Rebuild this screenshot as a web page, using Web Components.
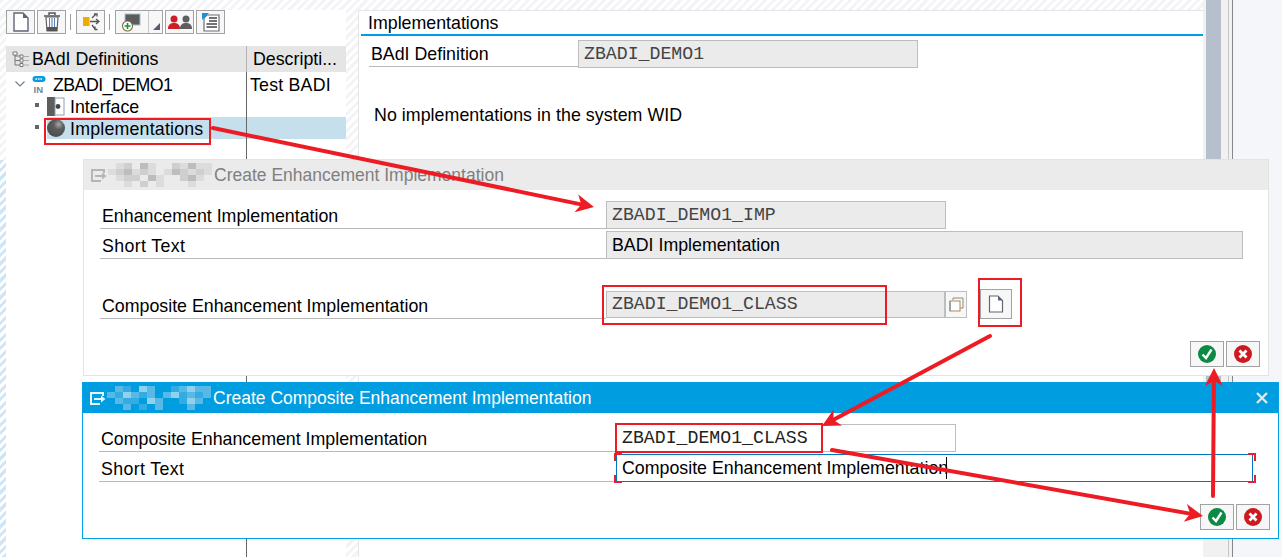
<!DOCTYPE html>
<html lang="en">
<head>
<meta charset="utf-8">
<title>BAdI Definitions</title>
<style>
  html, body { margin: 0; padding: 0; height: 100%; overflow: hidden; background: #fff; }
  body { font-family: "Liberation Sans", Arial, sans-serif; font-size: 17.8px; color: #000; }
  [slot="icon"] { display: block; }
</style>
</head>
<body>

<sap-screen>
  <sap-shell>
    <div slot="toolbar">
      <sap-toolbar>
        <sap-tool><svg width="18" height="20" viewBox="0 0 18 20"><path d="M2 1h9l5 5v13H2z" fill="#fff" stroke="#5f6478" stroke-width="1.4"/><path d="M11 1v5h5z" fill="#5f6478"/></svg></sap-tool>
        <sap-tool><svg width="18" height="20" viewBox="0 0 18 20"><path d="M1 4h16M6 3V1h6v2" fill="none" stroke="#555" stroke-width="1.5"/><path d="M3 5h12l-1 14H4z" fill="#fff" stroke="#666" stroke-width="1.2"/><path d="M3.6 15h10.8l-.4 4H4z" fill="#555"/><path d="M6.5 6v9M9 6v9M11.5 6v9" stroke="#5a82b0" stroke-width="1.1"/></svg></sap-tool>
        <sap-sep></sap-sep>
        <sap-tool><svg width="18" height="20" viewBox="0 0 18 20"><rect x="1" y="5" width="6.5" height="9" fill="#f0ab00"/><path d="M8 9.500h9M14 7l3 2.500-3 2.500M10 6l4-4M12 2h3v2.500M10 13l3 4M13 14.500V17.500h2.500" fill="none" stroke="#555" stroke-width="1.3"/></svg></sap-tool>
        <sap-sep></sap-sep>
        <sap-tool split><svg width="20" height="19" viewBox="0 0 20 19"><rect x="4" y="1" width="15" height="11" fill="#5c5c5c" stroke="#a8bccd"/><circle cx="6.500" cy="13" r="5" fill="#fff" stroke="#7a6a3a" stroke-width="1.1"/><path d="M6.500 10v6M3.500 13h6" stroke="#159447" stroke-width="1.6"/></svg></sap-tool>
        <sap-tool><svg width="24" height="15" viewBox="0 0 24 15"><circle cx="6" cy="4" r="3.500" fill="#d01c24"/><path d="M0 14c0-5 3-6 6-6s6 1 6 6z" fill="#d01c24"/><circle cx="18" cy="4" r="3.500" fill="#5f5f5f"/><path d="M12 14c0-5 3-6 6-6s6 1 6 6z" fill="#5f5f5f"/></svg></sap-tool>
        <sap-tool><svg width="20" height="20" viewBox="0 0 20 20"><path d="M6 3h12v16H3V6z" fill="#fff" stroke="#6a6e78" stroke-width="1.2"/><path d="M1 1h7L1 8z" fill="#1d8fd6"/><path d="M8 6h8M8 9h8M5.500 12h10.500M5.500 15h10.500" stroke="#444" stroke-width="1.400"/></svg></sap-tool>
      </sap-toolbar>
    </div>

    <sap-tree slot="tree">
      <svg slot="header-icon" width="18" height="17" viewBox="0 0 18 17"><path d="M3 2v12M3 5h5M3 9.500h5M3 14h5" fill="none" stroke="#777"/><path d="M1 1h4v3H1zM8 4h3v3H8zM8 8h3v3H8zM8 12.500h3v3H8z" fill="#fff" stroke="#777"/><path d="M12 5.500h5M12 9.500h5M12 14h5" stroke="#aaa"/></svg>
      <span slot="header">BAdI Definitions</span>
      <span slot="desc-header">Descripti...</span>
      <sap-tree-row kind="open" desc="Test BADI">
        <svg slot="icon" width="14" height="20" viewBox="0 0 14 20"><rect x="0.500" y="2" width="13" height="6" rx="3" fill="#0a9ce0"/><path d="M3.500 5h7" stroke="#fff" stroke-dasharray="1.500 1" stroke-width="1.600"/><text x="1.500" y="18.500" font-family="Liberation Sans, sans-serif" font-size="9.500" font-weight="700" fill="#6f8796">IN</text></svg>
        <span style="letter-spacing:-.55px">ZBADI_DEMO1</span>
      </sap-tree-row>
      <sap-tree-row kind="leaf">
        <svg slot="icon" width="18" height="19" viewBox="0 0 18 19"><rect x="0" y="0" width="8" height="19" fill="#5e5e5e"/><rect x="8" y="1" width="9" height="17" fill="#fff" stroke="#8aa0b0"/><circle cx="11" cy="9.500" r="2.400" fill="#444"/></svg>
        Interface
      </sap-tree-row>
      <sap-tree-row kind="leaf" selected>
        <svg slot="icon" width="18" height="18" viewBox="0 0 18 18"><defs><radialGradient id="ball" cx="0.650" cy="0.300" r="0.800"><stop offset="0" stop-color="#a8a8a8"/><stop offset="0.350" stop-color="#5d5d5d"/><stop offset="1" stop-color="#4a4a4a"/></radialGradient></defs><circle cx="9" cy="9" r="9" fill="url(#ball)"/></svg>
        <span style="letter-spacing:.2px">Implementations</span>
      </sap-tree-row>
    </sap-tree>

    <sap-detail slot="detail" heading="Implementations">
      <sap-row label="BAdI Definition" label-width="209" style="--row-h:27px">
        <sap-field mono width="340">ZBADI_DEMO1</sap-field>
      </sap-row>
      <sap-note>No implementations in the system WID</sap-note>
    </sap-detail>
  </sap-shell>

  <sap-dialog style="left:83px;top:159px;width:1186px;height:217px" heading="Create Enhancement Implementation" bar-colour="#ebebeb" edge="#e3e3e3" text="#808080" mask="grey" body-top="11" body-left="16">
    <sap-row label="Enhancement Implementation" label-width="506">
      <sap-field mono width="340">ZBADI_DEMO1_IMP</sap-field>
    </sap-row>
    <sap-row label="Short Text" label-width="506" style="margin-top:2px;--label-ls:.35px">
      <sap-field width="637">BADI Implementation</sap-field>
    </sap-row>
    <sap-row label="Composite Enhancement Implementation" label-width="506" style="margin-top:32px">
      <sap-field mono width="339" style="--field-h:27px">ZBADI_DEMO1_CLASS</sap-field>
      <sap-help></sap-help>
      <sap-tool style="--tool-w:32px;--tool-h:30px;margin:-2px 0 0 13px;align-self:flex-start"><svg width="16" height="18" viewBox="0 0 16 18"><path d="M1.500 1h8.500l4.500 4.500V17h-13z" fill="#fff" stroke="#5f6478" stroke-width="1.200"/><path d="M10 1v4.500h4.500z" fill="#5f6478"/></svg></sap-tool>
    </sap-row>
    <sap-actions slot="actions" style="--act-right:8px;--act-bottom:8px"></sap-actions>
  </sap-dialog>

  <sap-dialog style="left:82px;top:382px;width:1197px;height:157px" heading="Create Composite Enhancement Implementation" bar-colour="#009de0" edge="#00a0e3" text="#fff" mask="blue" closable body-top="11" body-left="16">
    <sap-row label="Composite Enhancement Implementation" label-width="517">
      <sap-field plain mono width="340">ZBADI_DEMO1_CLASS</sap-field>
    </sap-row>
    <sap-row label="Short Text" label-width="517" style="margin-top:2px;--label-ls:.35px">
      <sap-field focus width="637">Composite Enhancement Implementation</sap-field>
    </sap-row>
    <sap-actions slot="actions" style="--act-right:8px;--act-bottom:8px"></sap-actions>
  </sap-dialog>

  <sap-marks></sap-marks>
</sap-screen>

<script>
/* SAP GUI screen - vanilla Web Components, no framework */

const HATCH = 'repeating-linear-gradient(135deg,#f2f4f8 0 3px,#fff 3px 6px)';

function attach(el, html) {
  el.attachShadow({ mode: 'open' }).innerHTML = html;
}

class SapScreen extends HTMLElement {
  constructor() {
    super();
    attach(this, `<style>:host{display:block;position:relative;width:1282px;height:557px;overflow:hidden}</style><slot></slot>`);
  }
}
customElements.define('sap-screen', SapScreen);

class SapShell extends HTMLElement {
  constructor() {
    super();
    attach(this, `<style>
      :host{display:grid;height:557px;background:${HATCH};
        grid-template-columns:6px 340px 12px 845px 3px 15px 7px 1px 3px 1px 1fr;
        grid-template-rows:10px 36px 1fr}
      .stripe{grid-column:1;grid-row:3;margin-top:114px;background:repeating-linear-gradient(135deg,#cfe6f6 0 3px,#fff 3px 6px)}
      .left{grid-column:2;grid-row:2/4;display:flex;flex-direction:column;background:#fff;min-width:0}
      .tools{height:36px;flex:none}
      .tree{flex:1;display:flex;min-height:0}
      .detail{grid-column:4;grid-row:2/4;display:flex;min-width:0}
      .gap{grid-column:5/8;grid-row:1/4;background:#f1f1f1}
      .sash{grid-column:6;grid-row:1/4;height:500px;background:#b5c0cc}
      .pad{background:#f1f1f1;grid-row:1/4}
      .ln1{grid-column:8;grid-row:1/4;background:#c6c6c6}
      .ln2{grid-column:10;grid-row:1/4;background:#888}
      .rest{grid-column:11;grid-row:1/4;background:#f4f6fa}
    </style>
    <div class="stripe"></div>
    <div class="left"><div class="tools"><slot name="toolbar"></slot></div><div class="tree"><slot name="tree"></slot></div></div>
    <div class="detail"><slot name="detail"></slot></div>
    <div class="gap"></div><div class="sash"></div>
    <div class="ln1"></div>
    <div class="pad" style="grid-column:9"></div><div class="ln2"></div><div class="rest"></div>`);
  }
}
customElements.define('sap-shell', SapShell);

class SapToolbar extends HTMLElement {
  constructor() {
    super();
    attach(this, `<style>:host{display:flex;align-items:flex-start;gap:2px;height:24px}</style><slot></slot>`);
  }
}
customElements.define('sap-toolbar', SapToolbar);

class SapTool extends HTMLElement {
  constructor() {
    super();
    const split = this.hasAttribute('split');
    attach(this, `<style>
      :host{display:inline-flex;box-sizing:border-box;flex:none;width:var(--tool-w,${split ? '48px' : '29px'});height:var(--tool-h,24px);
        border:1px solid #a2a2a2;background:#f7f7f7}
      .main{flex:1;display:flex;align-items:center;justify-content:center;min-width:0}
      .drop{width:13px;border-left:1px solid #c8c8c8;position:relative}
      .drop::after{content:"";position:absolute;right:2px;bottom:3px;border-style:solid;border-width:0 0 7px 7px;border-color:transparent transparent #5a5a72 transparent}
    </style><span class="main"><slot></slot></span>${split ? '<span class="drop"></span>' : ''}`);
    if (split) this.shadowRoot.querySelector('.main').style.cssText = 'justify-content:flex-start;padding-left:5px';
  }
}
customElements.define('sap-tool', SapTool);

class SapSep extends HTMLElement {
  constructor() {
    super();
    attach(this, `<style>:host{display:block;width:1px;height:16px;background:#9b9b9b;margin:4px 3px 0 2px}</style>`);
  }
}
customElements.define('sap-sep', SapSep);

class SapTree extends HTMLElement {
  constructor() {
    super();
    attach(this, `<style>
      :host{display:flex;flex-direction:column;flex:1;min-width:0;line-height:20px}
      .head{display:grid;grid-template-columns:241px 1fr;height:26px;background:#e5e5e5;flex:none}
      .head div{display:flex;align-items:center}
      .name{padding-left:6px;gap:2px;border-right:1px solid #b4b4b4}
      .desc{padding-left:6px}
      .body{flex:1;padding-top:1px;background:linear-gradient(#666,#666) 240px 0/1px 100% no-repeat}
    </style>
    <div class="head"><div class="name"><slot name="header-icon"></slot><slot name="header"></slot></div><div class="desc"><slot name="desc-header"></slot></div></div>
    <div class="body"><slot></slot></div>`);
  }
}
customElements.define('sap-tree', SapTree);

class SapTreeRow extends HTMLElement {
  constructor() {
    super();
    const open = this.getAttribute('kind') === 'open';
    const selected = this.hasAttribute('selected');
    const marker = open
      ? '<svg width="10" height="6" viewBox="0 0 10 6"><path d="M.5.500 5 5l4.500-4.500" fill="none" stroke="#6b7a88" stroke-width="1.100"/></svg>'
      : '<i></i>';
    attach(this, `<style>
      :host{display:grid;grid-template-columns:241px 1fr;height:22px}
      .cell{display:flex;align-items:center;min-width:0}
      .mark{width:${open ? '26px' : '41px'};flex:none;display:flex;align-items:center;padding-left:${open ? '9px' : '29px'};box-sizing:border-box;height:100%}
      .mark i{width:4px;height:4px;background:#666;margin-top:-3px}
      .body{display:flex;align-items:center;height:100%;flex:1;gap:${open ? '7px' : '5px'};white-space:nowrap;${selected ? 'background:linear-gradient(#c5dfec,#c5dfec) 0 0/calc(100% - 1px) 100% no-repeat' : ''}}
      .text{padding-top:2px}
      ::slotted(svg){flex:none}
      .d{padding:2px 0 0 3px;box-sizing:border-box;letter-spacing:.2px;${selected ? 'background:#c5dfec' : ''}}
    </style>
    <div class="cell"><span class="mark">${marker}</span><span class="body"><slot name="icon"></slot><span class="text"><slot></slot></span></span></div>
    <div class="cell d">${this.getAttribute('desc') || ''}</div>`);
  }
}
customElements.define('sap-tree-row', SapTreeRow);

class SapDetail extends HTMLElement {
  constructor() {
    super();
    attach(this, `<style>
      :host{display:flex;flex-direction:column;flex:1;min-width:0;background:#fff;border-left:1px solid #e5e5e5;border-top:1px solid #e5e5e5;box-sizing:border-box}
      h2{margin:0 0 0 2px;font:inherit;height:23px;line-height:24px;padding-left:7px;border-bottom:2px solid #009de0;flex:none}
      .content{padding:4px 0 0 10px}
    </style>
    <h2>${this.getAttribute('heading')}</h2><div class="content"><slot></slot></div>`);
  }
}
customElements.define('sap-detail', SapDetail);

class SapRow extends HTMLElement {
  constructor() {
    super();
    const w = this.getAttribute('label-width');
    attach(this, `<style>
      :host{display:flex;align-items:flex-start}
      .label{box-sizing:border-box;width:${w}px;height:var(--row-h,28px);line-height:calc(var(--row-h,28px) + 2px);padding-left:2px;border-bottom:1px solid #b9b9b9;flex:none;white-space:nowrap;letter-spacing:var(--label-ls,0)}
    </style><div class="label">${this.getAttribute('label')}</div><slot></slot>`);
  }
}
customElements.define('sap-row', SapRow);

class SapField extends HTMLElement {
  constructor() {
    super();
    const mono = this.hasAttribute('mono');
    const plain = this.hasAttribute('plain');
    const focus = this.hasAttribute('focus');
    const w = this.getAttribute('width');
    attach(this, `<style>
      :host{display:block;position:relative;box-sizing:border-box;flex:none;width:${w}px;height:var(--field-h,28px);
        line-height:calc(var(--field-h,28px) - 2px);white-space:nowrap;padding-left:5px;
        border:1px solid ${focus ? '#0079c1' : '#bdbdbd'};
        background:${plain || focus ? '#fff' : '#ebebeb'};
        ${mono ? `font-family:"Liberation Mono","Courier New",monospace;font-size:18.2px;color:${plain ? '#222' : '#444'};` : ''}}
      .caret{position:absolute;left:329px;top:2px;width:1px;height:22px;background:#000}
      b{position:absolute;width:6px;height:6px;border:0 solid #e8202a}
      .tl{left:-3px;top:-2px;border-width:2px 0 0 2px}
      .bl{left:-3px;bottom:-2px;border-width:0 0 2px 2px}
      .tr{right:-4px;top:-2px;border-width:2px 2px 0 0}
      .br{right:-4px;bottom:-2px;border-width:0 2px 2px 0}
    </style><slot></slot>${focus ? '<span class="caret"></span><b class="tl"></b><b class="bl"></b><b class="tr"></b><b class="br"></b>' : ''}`);
  }
}
customElements.define('sap-field', SapField);

class SapHelp extends HTMLElement {
  constructor() {
    super();
    attach(this, `<style>
      :host{display:flex;align-items:center;justify-content:center;box-sizing:border-box;width:22px;height:27px;border:1px solid #bdbdbd;background:#f7f7f7;flex:none}
    </style><svg width="15" height="15" viewBox="0 0 15 15"><path d="M4 3V1h10v10h-3" fill="none" stroke="#8a8a8a"/><rect x="1" y="4" width="10" height="10" fill="#fff" stroke="#b58a4a"/><path d="M1 14V4" stroke="#5a86b5"/></svg>`);
  }
}
customElements.define('sap-help', SapHelp);

class SapNote extends HTMLElement {
  constructor() {
    super();
    attach(this, `<style>:host{display:block;margin:35px 0 0 5px;line-height:24px;letter-spacing:.05px}</style><slot></slot>`);
  }
}
customElements.define('sap-note', SapNote);

class SapActions extends HTMLElement {
  constructor() {
    super();
    attach(this, `<style>
      :host{position:absolute;right:var(--act-right);bottom:var(--act-bottom);display:flex;gap:2px}
      .b{box-sizing:border-box;width:34px;height:26px;border:1px solid #a2a2a2;background:#f7f7f7;display:flex;align-items:center;justify-content:center}
    </style>
    <div class="b"><svg width="18" height="18" viewBox="0 0 18 18"><circle cx="9" cy="9" r="9" fill="#0b8a44"/><path d="M4.500 9.500 8 13l5.500-8.500" fill="none" stroke="#fff" stroke-width="2.400"/></svg></div>
    <div class="b"><svg width="18" height="18" viewBox="0 0 18 18"><circle cx="9" cy="9" r="9" fill="#cc1a1f"/><path d="M5.500 5.500l7 7M12.500 5.500l-7 7" stroke="#fff" stroke-width="2.800"/></svg></div>`);
  }
}
customElements.define('sap-actions', SapActions);

/* the pixelated block that hides the system name in the title bar */
class SapMask extends HTMLElement {
  constructor() {
    super();
    const blue = this.getAttribute('tone') === 'blue';
    const rows = ['0120310021311', '1231210132121', '0122031002310', '0010201000100'];
    const tones = blue
      ? ['#009de0', '#58b9e6', '#33ace2', '#90d2ee']
      : ['#ebebeb', '#dcdcdc', '#cfcfcf', '#bdbdbd'];
    let rects = '';
    rows.forEach((r, y) => [...r].forEach((c, x) => {
      rects += `<rect x="${x * 8}" y="${y * 6}" width="8" height="6" fill="${tones[+c]}"/>`;
    }));
    attach(this, `<style>:host{display:block;flex:none;width:104px;height:24px}</style><svg width="104" height="24" viewBox="0 0 104 24" shape-rendering="crispEdges">${rects}</svg>`);
  }
}
customElements.define('sap-mask', SapMask);

class SapDialog extends HTMLElement {
  constructor() {
    super();
    const text = this.getAttribute('text');
    const close = this.hasAttribute('closable')
      ? '<svg class="x" width="12" height="12" viewBox="0 0 12 12"><path d="M1 1l10 10M11 1 1 11" stroke="#e6e6e6" stroke-width="2.400"/></svg>'
      : '';
    attach(this, `<style>
      :host{position:absolute;box-sizing:border-box;background:#fff;border:1px solid ${this.getAttribute('edge')};display:flex;flex-direction:column}
      .bar{height:30px;flex:none;display:flex;align-items:center;background:${this.getAttribute('bar-colour')};color:${text};padding-left:7px;white-space:nowrap;position:relative;font-size:17.5px}
      .bar>svg:first-child{flex:none;margin-right:1px}
      .title{margin-left:2px}
      .x{position:absolute;right:10px;top:9px}
      .body{padding:${this.getAttribute('body-top')}px 0 0 ${this.getAttribute('body-left')}px;flex:1}
    </style>
    <div class="bar">
      <svg width="16" height="13" viewBox="0 0 16 13"><path d="M13 4V1H1v11h9" fill="none" stroke="${text === '#fff' ? '#e6f4fb' : '#b5b5b5'}" stroke-width="2"/><path d="M4 6h7V3.500L15.500 7 11 10.500V8H4z" fill="${text === '#fff' ? '#e6f4fb' : '#b5b5b5'}"/></svg>
      <sap-mask tone="${this.getAttribute('mask')}"></sap-mask>
      <span class="title">${this.getAttribute('heading')}</span>${close}
    </div>
    <div class="body"><slot></slot></div><slot name="actions"></slot>`);
  }
}
customElements.define('sap-dialog', SapDialog);

/* the red rectangles and arrows someone painted over the screenshot */
class SapMarks extends HTMLElement {
  constructor() {
    super();
    const boxes = [[45, 119, 165, 25], [603, 286, 283, 38], [979, 279, 42, 47], [616, 424, 206, 28]];
    const arrows = [[213, 128, 594, 207], [990, 336, 822, 426], [832, 450, 1203, 516], [1213, 496, 1214, 368]];
    const red = '#ed1c24';
    let out = boxes.map(([x, y, w, h]) => `<rect x="${x}" y="${y}" width="${w}" height="${h}" fill="none" stroke="${red}" stroke-width="2"/>`).join('');
    for (const [x1, y1, x2, y2] of arrows) {
      const a = Math.atan2(y2 - y1, x2 - x1);
      const p = (d, s) => `${(x2 - d * Math.cos(a) - s * Math.sin(a)).toFixed(1)},${(y2 - d * Math.sin(a) + s * Math.cos(a)).toFixed(1)}`;
      out += `<line x1="${x1}" y1="${y1}" x2="${p(12, 0).split(',')[0]}" y2="${p(12, 0).split(',')[1]}" stroke="${red}" stroke-width="4" stroke-linecap="round"/>`;
      out += `<polygon points="${x2},${y2} ${p(18, 9)} ${p(13, 0)} ${p(18, -9)}" fill="${red}"/>`;
    }
    attach(this, `<style>:host{position:absolute;left:0;top:0;width:1282px;height:557px;pointer-events:none}svg{display:block}</style><svg width="1282" height="557">${out}</svg>`);
  }
}
customElements.define('sap-marks', SapMarks);
</script>
</body>
</html>
